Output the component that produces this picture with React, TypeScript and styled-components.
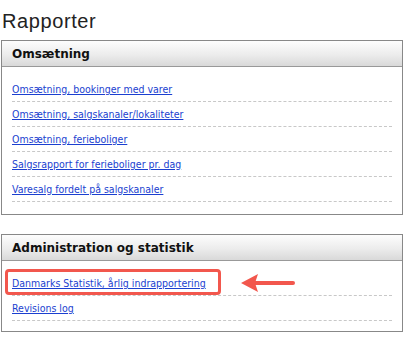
import React from 'react';
import styled, { createGlobalStyle } from 'styled-components';

const GlobalStyle = createGlobalStyle`
  body {
    margin: 0;
    background: #fff;
    font-family: "DejaVu Sans", Verdana, sans-serif;
  }
`;

const Page = styled.div`
  padding: 8px 8px 0 1px;
  width: 402px;
`;

const Title = styled.h1`
  margin: 0 0 6px 1px;
  font-family: "Liberation Sans", Arial, sans-serif;
  font-weight: normal;
  font-size: 20px;
  letter-spacing: 0.6px;
  line-height: 26px;
  color: #222;
`;

const Panel = styled.section`
  border: 1px solid #888;
  margin-bottom: 19px;
`;

const PanelHeader = styled.h2`
  margin: 0;
  height: 25px;
  padding: 0 10px;
  display: flex;
  align-items: center;
  border-bottom: 1px solid #999;
  background: linear-gradient(to bottom, #fdfdfd 0%, #ececec 55%, #d9d9d9 100%);
  font-family: "DejaVu Sans", Verdana, sans-serif;
  font-weight: bold;
  font-size: 12px;
  color: #111;
`;

const LinkList = styled.ul<{ $bottom: number }>`
  list-style: none;
  margin: 0;
  padding: 10px 10px ${(p) => p.$bottom}px;
`;

const Row = styled.li<{ $highlight?: boolean }>`
  position: relative;
  height: 24px;
  display: flex;
  align-items: center;
  border-bottom: 1px dashed #c8c8c8;

  ${(p) =>
    p.$highlight &&
    `
    &::before {
      content: '';
      position: absolute;
      left: -7px;
      top: -2px;
      width: 210px;
      height: 20px;
      border: 3px solid #f2574d;
      border-radius: 4px;
    }
  `}
`;

const ReportLink = styled.a`
  font-family: "DejaVu Sans Condensed", "DejaVu Sans", Verdana, sans-serif;
  font-stretch: condensed;
  font-size: 10.5px;
  color: #1b3fd0;
  text-decoration: underline;
  cursor: pointer;
`;

const Arrow = styled.svg`
  position: absolute;
  left: 220px;
  top: 0px;
  width: 70px;
  height: 24px;
`;

const sales = [
  'Omsætning, bookinger med varer',
  'Omsætning, salgskanaler/lokaliteter',
  'Omsætning, ferieboliger',
  'Salgsrapport for ferieboliger pr. dag',
  'Varesalg fordelt på salgskanaler',
];

const App: React.FC = () => (
  <Page>
    <GlobalStyle />
    <Title>Rapporter</Title>
    <Panel>
      <PanelHeader>Omsætning</PanelHeader>
      <LinkList $bottom={12}>
        {sales.map((name) => (
          <Row key={name}>
            <ReportLink>{name}</ReportLink>
          </Row>
        ))}
      </LinkList>
    </Panel>
    <Panel>
      <PanelHeader>Administration og statistik</PanelHeader>
      <LinkList $bottom={10}>
        <Row $highlight>
          <ReportLink>Danmarks Statistik, årlig indrapportering</ReportLink>
          <Arrow viewBox="0 0 70 24">
            <line x1="22" y1="12" x2="61" y2="12" stroke="#f2574d" strokeWidth="4" strokeLinecap="round" />
            <polygon points="9,12 26,3 23,12 26,21" fill="#f2574d" />
          </Arrow>
        </Row>
        <Row>
          <ReportLink>Revisions log</ReportLink>
        </Row>
      </LinkList>
    </Panel>
  </Page>
);

export default App;
